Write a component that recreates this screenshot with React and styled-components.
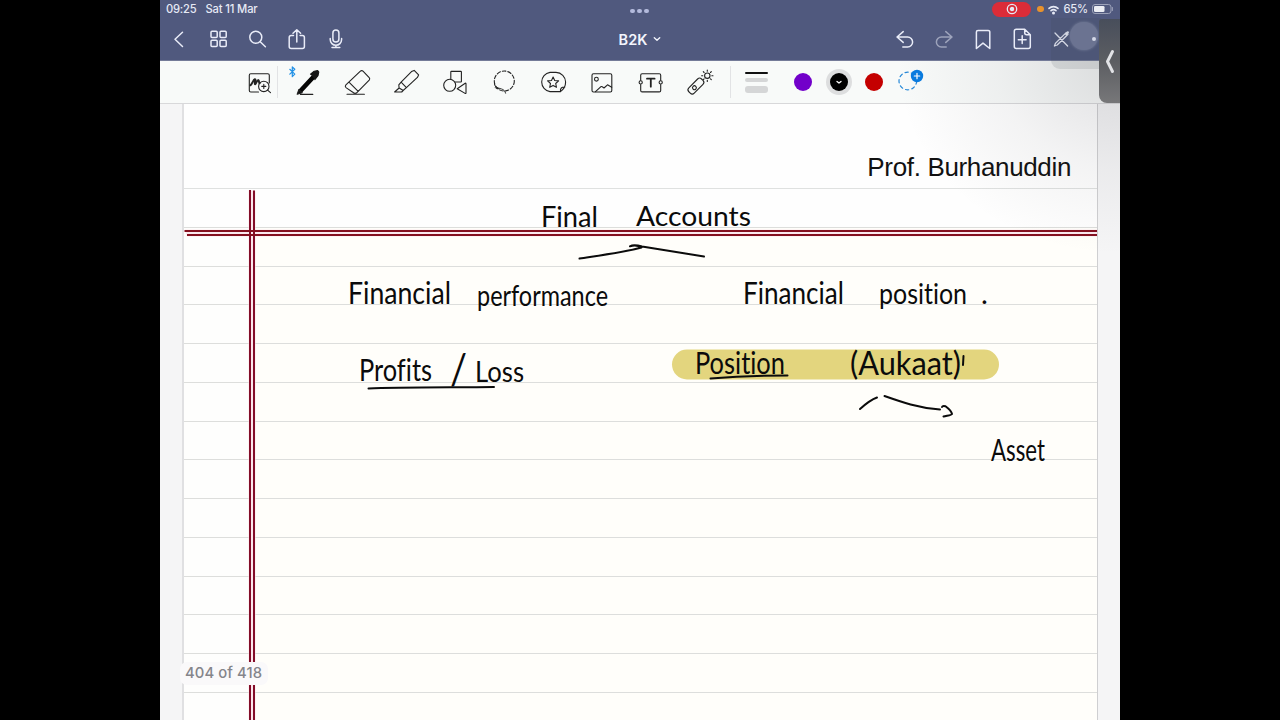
import React from "react";
import styled, { createGlobalStyle } from "styled-components";

const GlobalStyle = createGlobalStyle`
  body { margin: 0; background: #000; overflow: hidden; }
  * { box-sizing: border-box; }
`;

const Stage = styled.div`
  width: 1280px;
  height: 720px;
  background: #000;
  display: flex;
  justify-content: center;
  overflow: hidden;
  font-family: Inter, "Liberation Sans", sans-serif;
`;

const Tablet = styled.main`
  position: relative;
  width: 960px;
  height: 720px;
  display: flex;
  flex-direction: column;
  background: #f5f5f6;
  overflow: hidden;
`;

const Header = styled.header`
  height: 61px;
  flex: none;
  background: #50597e;
  border-bottom: 1px solid #747b98;
`;

const StatusBar = styled.div`
  height: 18px;
  display: grid;
  grid-template-columns: 1fr auto 1fr;
  align-items: center;
  padding: 0 7px 0 6px;
  color: #e6e9f5;
  font-size: 11.2px;
  font-weight: 500;
`;

const StatusGroup = styled.div`
  display: flex;
  align-items: center;
  height: 18px;
  gap: ${(p) => p.$gap}px;
  justify-content: ${(p) => (p.$end ? "flex-end" : "flex-start")};
`;

const StatusText = styled.span`
  letter-spacing: ${(p) => p.$track || 0}px;
`;

const Dots = styled.div`
  display: flex;
  gap: 2.6px;
  margin-top: 4px;
`;

const Dot = styled.i`
  width: ${(p) => p.$size}px;
  height: ${(p) => p.$size}px;
  border-radius: 50%;
  background: ${(p) => p.$color};
  flex: none;
`;

const RecordPill = styled.div`
  width: 39px;
  height: 15px;
  border-radius: 8px;
  background: #db2c38;
  display: flex;
  align-items: center;
  justify-content: center;
  margin-right: 2px;
`;

const NavBar = styled.nav`
  height: 42px;
  display: grid;
  grid-template-columns: 1fr auto 1fr;
  align-items: center;
  color: #e9ecf8;
`;

const NavGroup = styled.div`
  display: flex;
  justify-content: ${(p) => (p.$end ? "flex-end" : "flex-start")};
  padding-right: ${(p) => (p.$end ? 40 : 0)}px;
`;

const NavButton = styled.span`
  width: ${(p) => p.$w}px;
  height: 42px;
  display: flex;
  align-items: center;
  justify-content: center;
  opacity: ${(p) => (p.$dim ? 0.5 : 1)};
`;

const Title = styled.h1`
  margin: 0;
  display: flex;
  align-items: center;
  gap: 6px;
  font-size: 14.5px;
  font-weight: 600;
  color: #f3f5fd;
`;

const Toolbar = styled.div`
  height: 43px;
  flex: none;
  display: flex;
  align-items: center;
  background: #f8faf9;
  border-bottom: 1px solid #d8d8da;
  padding-left: 83px;
  color: #222;
`;

const Tool = styled.span`
  width: ${(p) => p.$w || 49}px;
  height: 32px;
  display: flex;
  align-items: center;
  justify-content: center;
  flex: none;
`;

const Divider = styled.i`
  width: 1px;
  height: 32px;
  background: #e2e3e5;
`;

const Widths = styled.div`
  width: 23px;
  margin: 0 22.5px 0 13.5px;
  display: flex;
  flex-direction: column;
  gap: 4px;
`;

const WidthBar = styled.i`
  height: ${(p) => p.$h}px;
  border-radius: 3px;
  background: ${(p) => p.$color};
`;

const Swatch = styled.span`
  width: 26px;
  height: 26px;
  margin-right: 9.7px;
  border-radius: 50%;
  background: ${(p) => (p.$active ? "#dddedf" : "transparent")};
  display: flex;
  align-items: center;
  justify-content: center;
  flex: none;
`;

const SwatchFill = styled.i`
  width: 18px;
  height: 18px;
  border-radius: 50%;
  background: ${(p) => p.$color};
  display: flex;
  align-items: center;
  justify-content: center;
`;

const Canvas = styled.section`
  position: relative;
  flex: 1;
  padding: 0 22px;
  overflow: hidden;
`;

const Paper = styled.article`
  width: 916px;
  height: 616px;
  background: #fefefe;
  border-left: 2px solid #e0e0e2;
  border-right: 1px solid #cfcfd1;
  overflow: hidden;
`;

const PaperHead = styled.div`
  height: 85px;
  padding: 46px 26px 0 0;
  border-bottom: 1px solid #dfe1e0;
  text-align: right;
  font: 26px/34px "Liberation Sans", sans-serif;
  letter-spacing: -0.35px;
  color: #111;
`;

const Line = styled.div`
  height: 38.75px;
  border-bottom: 1px solid #dddedc;
  background: ${(p) =>
    p.$plain ? "#fefefe" : "linear-gradient(90deg, #fefefd 72px, #fffefa 72px)"};
`;

const Ink = styled.svg`
  position: absolute;
  left: 0;
  top: 0;
  fill: none;
  stroke: #0b0b0b;
  stroke-width: 2;
  stroke-linecap: round;
  stroke-linejoin: round;
`;

const Handwriting = styled.text`
  font-family: Lato, "Liberation Sans", sans-serif;
  font-size: ${(p) => p.$size || 29}px;
  font-variant-ligatures: none;
  fill: #0b0b0b;
  stroke: none;
`;

const PageLabel = styled.div`
  position: absolute;
  left: 20px;
  bottom: 35px;
  height: 23px;
  width: 88px;
  padding-left: 5px;
  line-height: 23px;
  border-radius: 7px;
  background: #faf9fa;
  font-size: 14.8px;
  font-weight: 500;
  letter-spacing: 0.1px;
  color: #85858a;
`;

const FloatingShade = styled.div`
  position: absolute;
  left: 891px;
  top: 18px;
  width: 50px;
  height: 51px;
  border-radius: 0 0 0 9px;
  background: rgba(60, 70, 80, 0.13);
`;

const TouchPoint = styled.div`
  position: absolute;
  left: 910px;
  top: 22px;
  width: 28px;
  height: 28px;
  border-radius: 50%;
  background: #6b7391;
  box-shadow: 0 0 3px #78809b;
`;

const TouchDot = styled(Dot)`
  position: absolute;
  right: 2px;
  top: 15px;
`;

const SideHandle = styled.div`
  position: absolute;
  left: 939px;
  top: 19px;
  width: 21px;
  height: 84px;
  border-radius: 3px 0 0 8px;
  background: linear-gradient(#484e5b, #5c5e62 50%, #777779);
  display: flex;
  align-items: center;
  justify-content: center;
`;

const CornerGlow = styled.div`
  position: absolute;
  right: 0;
  top: 61px;
  width: 220px;
  height: 190px;
  background: radial-gradient(ellipse at top right, rgba(70, 70, 80, 0.17), rgba(70, 70, 80, 0.06) 40%, transparent 72%);
`;

const Svg = ({ size = 24, sw = 1.5, children }) => (
  <svg
    width={size}
    height={size}
    viewBox={`0 0 ${size} ${size}`}
    fill="none"
    stroke="currentColor"
    strokeWidth={sw}
    strokeLinecap="round"
    strokeLinejoin="round"
    overflow="visible"
  >
    {children}
  </svg>
);

const ToolIcon = ({ children }) => <Svg size={32} sw={1.1}>{children}</Svg>;

const leftNav = [
  <path d="M14.5 5.3 7 12.3l7.500 7.200" />,
  <>
    <rect x="4" y="4.3" width="6.2" height="6.2" rx="1" />
    <rect x="13" y="4.3" width="6.2" height="6.2" rx="1" />
    <rect x="4" y="13.3" width="6.2" height="6.2" rx="1" />
    <rect x="13" y="13.3" width="6.2" height="6.2" rx="1" />
  </>,
  <>
    <circle cx="9.8" cy="10.3" r="6" />
    <path d="m14.2 14.7 5.2 5" />
  </>,
  <path d="M8.5 8.4H6.2a2 2 0 0 0-2 2v9.2a2 2 0 0 0 2 2h11.2a2 2 0 0 0 2-2v-9.2a2 2 0 0 0-2-2h-2.3M11.8 15V3M8 6.3 11.8 2.8l3.8 3.5" />,
  <>
    <rect x="8.9" y="3" width="6" height="12" rx="3" />
    <path d="M6.2 11.4v1.2a5.7 5.7 0 0 0 11.4 0v-1.2M11.9 18.3v2.2M8 20.6h7.8" />
  </>,
];

const rightNav = [
  <path d="M10.2 4.6 4 10l6.2 5.4M4 10h10.6a5 5 0 0 1 0 10H9.8" />,
  <path d="M13.8 4.6 20 10l-6.2 5.4M20 10H9.4a5 5 0 0 0 0 10h4.8" />,
  <path d="M5.4 5a1.6 1.6 0 0 1 1.6-1.6h10.2A1.6 1.6 0 0 1 18.8 5v16.5L12 16.1l-6.6 5.4Z" />,
  <path d="M14.7 2.3H6.3a2 2 0 0 0-2 2v15.3a2 2 0 0 0 2 2h12a2 2 0 0 0 2-2V7.8ZM14.7 2.3v3.5a2 2 0 0 0 2 2h3.6M12.2 8.8v7.8M8.3 12.7h7.8" />,
  <>
    <path d="m6 6 12.6 13M5.4 19l1-2.6L17.2 5.600M5.4 19l2.800-1L19 7.200" strokeWidth="1.3" />
    <path d="m17.3 7 1.5-1.6" strokeWidth="2.4" />
  </>,
];

const tools = [
  <>
    <g stroke="#2492e6" strokeWidth="1.2"><path d="m-2.200 3.300 5 4.800-2.500 2.600V.9l2.500 2.400-5 4.800" /></g>
    <path d="m8.600 24.800 13.900-15" stroke="#050505" strokeWidth="4.600" />
    <path d="M5.2 28.300 6.800 23.600l3.400 3.100Z" fill="#111" />
    <path d="M18.500 8.200 22.200 5.200l3.500-.6 1.100 1.400-.800 3.700-3.200 3.900" stroke="#151515" fill="#151515" />
    <path d="M8.5 28.4h12.300" />
  </>,
  <path d="M19.4 5.2a1.8 1.8 0 0 1 2.6 0l6.2 6.5a1.8 1.8 0 0 1 0 2.4L16.4 26.2a3 3 0 0 1-4.6 0L5 21.6a2 2 0 0 1-.1-2.8ZM8.2 16.3l9 9M6 28.3h17.4" />,
  <path d="m24.2 4.4 4.4 4.5-1.2 2.5-11 10.2-5.3-5.4 10.400-10.6ZM11.1 16.2l-2.3 2.6.3 3.2-4.500 4h7.1l1.400-1.5 3.3-2.9M9.1 22l3.8 2.3" />,
  <>
    <rect x="11.8" y="5.4" width="10.6" height="10.6" rx=".6" fill="#f8faf9" />
    <circle cx="10.7" cy="19.3" r="6" fill="#f8faf9" />
    <path d="m18.2 22.7 8-5.5q.8-.2.8.6v9q0 1-.9.6Z" fill="#f8faf9" />
  </>,
  <>
    <circle cx="16.3" cy="15" r="10" strokeDasharray="3.6 2" />
    <path d="M6.4 17.5c-.2 3 2 3.6 3.8 4.4s4.6 1 6 2.600q1.1 1.300 1.400 2.700M7.500 20.600c-1.200 1.600 1.200 2.600 3.600 2" strokeWidth=".9" />
  </>,
  <>
    <path d="M23.5 25.6H13A9.7 9.7 0 0 1 13 6.4h6a9.7 9.7 0 0 1 9.6 9.7c0 4-2 7.4-5.1 9.5Zm0 0c-.6-3.3 1.4-4.8 4.3-4.6" />
    <path d="m16.1 11 1.6 3.5 3.9.4-2.9 2.6.8 3.8-3.4-1.9-3.4 1.9.8-3.8-2.9-2.6 3.9-.4Z" />
  </>,
  <>
    <rect x="6" y="7.7" width="19.8" height="18.3" rx="1.5" />
    <circle cx="10.4" cy="13.2" r="1.9" />
    <path d="m9.5 25.7 5.2-4.9q1-.7 2 .2l1.3 1 3.5-3.2 4.2 2.5" />
  </>,
  <>
    <path d="M5.7 14.3V9.2q0-1.400 1.400-1.400h17.2q1.400 0 1.400 1.400v5.1M5.7 18.6v5.9q0 1.400 1.400 1.400h17.2q1.400 0 1.400-1.400v-5.9" />
    <circle cx="5.7" cy="16.4" r="1.6" />
    <circle cx="25.7" cy="16.4" r="1.6" />
    <path d="M12 12.700h7.600M15.800 12.700V20.700" strokeWidth="1.800" />
  </>,
  <>
    <g transform="rotate(-45 12.2 19.8)">
      <rect x="2.8" y="16" width="18" height="7.6" rx="2.8" />
      <circle cx="9.6" cy="19.9" r="1.9" />
    </g>
    <circle cx="23.3" cy="9.7" r="2.7" />
    <path d="M23.3 5.2V4M23.3 15.4v-1.2M18.8 9.7h-1.2M29 9.7h-1.2M20.1 6.5l-.8-.8M27.3 13.7l-.8-.8M20.1 12.9l-.8.8M27.3 5.7l-.8.8" />
  </>,
];

export default function App() {
  return (
    <>
      <GlobalStyle />
      <Stage>
        <Tablet>
          <Header>
            <StatusBar>
              <StatusGroup $gap={9}>
                <StatusText $track={-0.2}>09:25</StatusText>
                <StatusText $track={-0.15}>Sat 11 Mar</StatusText>
              </StatusGroup>
              <Dots>
                {[0, 1, 2].map((i) => <Dot key={i} $size={4.5} $color="#b3badc" />)}
              </Dots>
              <StatusGroup $gap={4.3} $end>
                <RecordPill>
                  <Svg size={12} sw={1.3}>
                    <circle cx="6" cy="6" r="4.7" />
                    <circle cx="6" cy="6" r="1.6" fill="currentColor" />
                  </Svg>
                </RecordPill>
                <Dot $size={6.5} $color="#e8922c" />
                <Svg size={11} sw={1.6}>
                  <path d="M1 4.4a6.5 6.5 0 0 1 9 0M3 6.7a3.7 3.7 0 0 1 5 0" />
                  <circle cx="5.5" cy="9" r=".7" fill="currentColor" />
                </Svg>
                <StatusText $track={-0.3}>65%</StatusText>
                <svg width="21" height="10" viewBox="0 0 21 10">
                  <rect x=".5" y=".5" width="18.5" height="9" rx="2.5" fill="none" stroke="#9ca2b9" />
                  <rect x="2" y="2" width="10.500" height="6" rx="1.3" fill="#eceef4" />
                  <path d="M20.400 3.5v3" stroke="#9ca2b9" strokeLinecap="round" />
                </svg>
              </StatusGroup>
            </StatusBar>
            <NavBar>
              <NavGroup>
                {leftNav.map((icon, i) => (
                  <NavButton key={i} $w={39.2}><Svg>{icon}</Svg></NavButton>
                ))}
              </NavGroup>
              <Title>
                B2K
                <Svg size={8} sw={1.4}><path d="M1.3 2.8 4 5.2l2.7-2.4" /></Svg>
              </Title>
              <NavGroup $end>
                {rightNav.map((icon, i) => (
                  <NavButton key={i} $w={39} $dim={i === 1}><Svg>{icon}</Svg></NavButton>
                ))}
              </NavGroup>
            </NavBar>
          </Header>

          <Toolbar>
            <Tool $w={34}>
              <ToolIcon>
                <path d="M14.5 26H6.8a1.5 1.5 0 0 1-1.5-1.5V9.2a1.5 1.5 0 0 1 1.5-1.5h17a1.5 1.5 0 0 1 1.5 1.5V17" />
                <path d="M6.5 19.3c1.8-1.4 2.7-5.6 4.3-6.1s-.6 4.2.1 4.9 2.4-4.3 3.5-4 .1 3 1.2 3.2" strokeWidth="2" />
                <circle cx="19.8" cy="20.4" r="5.2" />
                <path d="m23.6 24.2 2.9 2.5M17.8 20.4h4M19.8 18.4v4" />
              </ToolIcon>
            </Tool>
            <Divider />
            <Tool $w={5} />
            {tools.map((icon, i) => <Tool key={i}><ToolIcon>{icon}</ToolIcon></Tool>)}
            <Tool $w={6} />
            <Divider />
            <Widths>
              <WidthBar $h={2} $color="#111" />
              <WidthBar $h={4} $color="#d5d6d7" />
              <WidthBar $h={7} $color="#d5d6d7" />
            </Widths>
            <Swatch><SwatchFill $color="#7200ca" /></Swatch>
            <Swatch $active>
              <SwatchFill $color="#000">
                <Svg size={8} sw={1.3}><g stroke="#fff"><path d="M2 3.4 4 5l2-1.6" /></g></Svg>
              </SwatchFill>
            </Swatch>
            <Swatch><SwatchFill $color="#c40000" /></Swatch>
            <Svg size={26} sw={1.2}>
              <circle cx="10.8" cy="12" r="8.8" stroke="#2487d8" strokeDasharray="3.2 3.2" />
              <circle cx="20" cy="7" r="6.2" fill="#087be0" stroke="none" />
              <path d="M20 4.3v5.4M17.3 7h5.4" stroke="#fff" />
            </Svg>
          </Toolbar>

          <Canvas>
            <Paper>
              <PaperHead>Prof. Burhanuddin</PaperHead>
              <Line $plain />
              {Array.from({ length: 13 }, (_, i) => <Line key={i} />)}
            </Paper>
            <Ink width="960" height="616" viewBox="160 104 960 616">
              <g strokeLinecap="butt">
                <path d="M248.500 190.5h7V720h-7Z" fill="#fbe6ec" stroke="none" />
                <path d="M185 229.500h912v7H187Z" fill="#fbe9ee" stroke="none" />
                <path d="M250 190V720M254 190.5V720" stroke="#830d28" strokeWidth="2" />
                <path d="M184.5 231H1097M187 235H1097" stroke="#84101f" strokeWidth="2" />
              </g>
              <rect x="672" y="349.5" width="327" height="30" rx="15" fill="#e3d57e" stroke="none" />
              <Handwriting x="541" y="227" textLength="57" lengthAdjust="spacingAndGlyphs">Final</Handwriting>
              <Handwriting x="636" y="226" textLength="115" lengthAdjust="spacingAndGlyphs" $size={27}>Accounts</Handwriting>
              <Handwriting x="348" y="304" textLength="103" lengthAdjust="spacingAndGlyphs" $size={30}>Financial</Handwriting>
              <Handwriting x="477" y="306" textLength="131" lengthAdjust="spacingAndGlyphs">performance</Handwriting>
              <Handwriting x="743" y="304" textLength="101" lengthAdjust="spacingAndGlyphs" $size={30}>Financial</Handwriting>
              <Handwriting x="879" y="304" textLength="88" lengthAdjust="spacingAndGlyphs">position</Handwriting>
              <Handwriting x="981" y="304">.</Handwriting>
              <Handwriting x="359" y="381" textLength="73" lengthAdjust="spacingAndGlyphs" $size={31}>Profits</Handwriting>
              <Handwriting x="450" y="384" textLength="17" lengthAdjust="spacingAndGlyphs" $size={42}>/</Handwriting>
              <Handwriting x="475" y="382" textLength="49" lengthAdjust="spacingAndGlyphs">Loss</Handwriting>
              <Handwriting x="695" y="374" textLength="90" lengthAdjust="spacingAndGlyphs" $size={31}>Position</Handwriting>
              <Handwriting x="850" y="375" textLength="111" lengthAdjust="spacingAndGlyphs" $size={32}>(Aukaat)</Handwriting>
              <Handwriting x="991" y="461" textLength="54" lengthAdjust="spacingAndGlyphs" $size={30}>Asset</Handwriting>
              <path d="M579.5 258.5c20-3 44-6 62-11-3-2-8-2.5-11.500-1.2 3-2 8-1 12 .2l62 10" />
              <path d="M368.5 388.5c30-1.500 86-1 125.500-1.500M710.500 378.500c24-2 50-3 77-3M963.500 356l-.5 9" />
              <path d="M860 409c5-4.500 10-9 17-11.500M884.5 396c17 6 34 12 55.500 13.500M942 407c.5-1.500 2-1.200 3.500-.8 2.500 1.800 6 5.500 6.500 7.800-.5 1.500-6 1.600-8.500 2.500" />
            </Ink>
            <PageLabel>404 of 418</PageLabel>
          </Canvas>
          <CornerGlow />
          <FloatingShade />
          <TouchPoint><TouchDot $size={4} $color="#d4d8e7" /></TouchPoint>
          <SideHandle>
            <Svg size={24} sw={3}><g stroke="#e2e3e6"><path d="M14.500 2.5 9.500 12.500l5 10" /></g></Svg>
          </SideHandle>
        </Tablet>
      </Stage>
    </>
  );
}
